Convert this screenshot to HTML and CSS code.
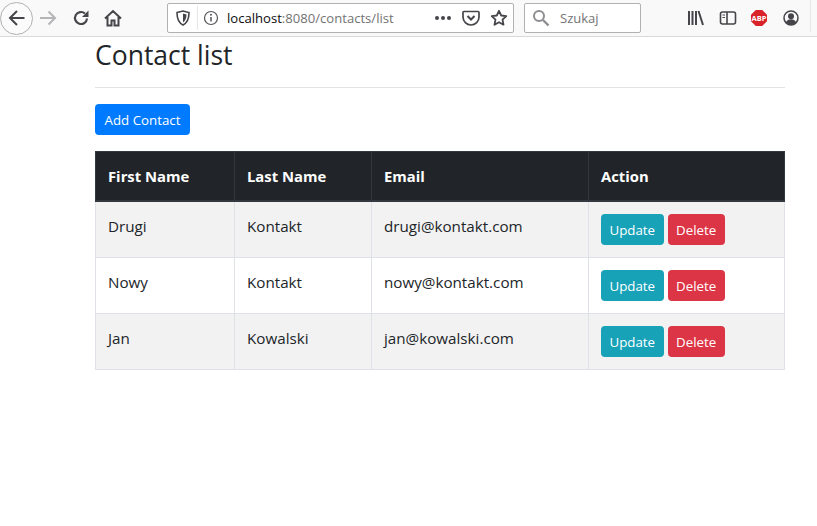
FILE: index.html
```html
<!DOCTYPE html>
<html lang="pl">
<head>
    <meta charset="UTF-8">
    <title>Contact list</title>
    <link rel="stylesheet" href="styles.css">
</head>
<body>
    <!-- Browser toolbar -->
    <div class="toolbar">
        <div class="back-btn">
            <svg width="20" height="20" viewBox="0 0 20 20"><path d="M17.500 10H3.500M10 3L3 10l7 7" fill="none" stroke="#45454a" stroke-width="2"/></svg>
        </div>
        <svg class="forward" width="18" height="18" viewBox="0 0 18 18"><path d="M1 9h15M9.500 2.500L16 9l-6.500 6.500" fill="none" stroke="#b5b5b8" stroke-width="2"/></svg>
        <svg class="reload" width="18" height="18" viewBox="0 0 18 18"><path d="M15 9.500A6 6 0 1 1 13 4.500" fill="none" stroke="#45454a" stroke-width="2.200"/><path d="M16.500 1.500v6.500h-6.500z" fill="#45454a"/></svg>
        <svg class="home" width="18" height="18" viewBox="0 0 18 18"><path d="M1 9.500L9 2l8 7.500M3.500 8v8.500h4v-5h3v5h4V8" fill="none" stroke="#45454a" stroke-width="2"/></svg>

        <div class="urlbar">
            <svg class="shield" width="16" height="16" viewBox="0 0 16 16"><path d="M2 2.500L8 1l6 1.500c0 6-1 10-6 12.500C3 12.500 2 8.500 2 2.500z" fill="none" stroke="#45454a" stroke-width="1.600"/><path d="M8 3.500l3.500 1c0 3.500-1 6-3.500 8z" fill="#45454a"/></svg>
            <span class="url-sep"></span>
            <svg class="info" width="16" height="16" viewBox="0 0 16 16"><circle cx="8" cy="8" r="6.500" fill="none" stroke="#55555a" stroke-width="1.200"/><path d="M8 7v4.500" stroke="#55555a" stroke-width="1.500"/><circle cx="8" cy="4.800" r="1" fill="#55555a"/></svg>
            <span class="url-text">localhost<span class="url-dim">:8080/contacts/list</span></span>
            <span class="dots"><i></i><i></i><i></i></span>
            <svg class="pocket" width="18" height="18" viewBox="0 0 18 18"><path d="M2 2.500h14a1 1 0 0 1 1 1V8a8 8 0 0 1-16 0V3.500a1 1 0 0 1 1-1z" fill="none" stroke="#45454a" stroke-width="1.700"/><path d="M5.500 7L9 10.500 12.500 7" fill="none" stroke="#45454a" stroke-width="2"/></svg>
            <svg class="star" width="18" height="18" viewBox="0 0 18 18"><path d="M9 1.800l2.200 4.700 5.100.6-3.800 3.500 1 5.100L9 13.200l-4.500 2.500 1-5.100L1.700 7.100l5.100-.6z" fill="none" stroke="#45454a" stroke-width="1.800" stroke-linejoin="round"/></svg>
        </div>

        <div class="searchbar">
            <svg width="18" height="18" viewBox="0 0 18 18"><circle cx="7" cy="7" r="5" fill="none" stroke="#8d8d92" stroke-width="2"/><path d="M11 11l5.500 5.500" stroke="#8d8d92" stroke-width="2.400"/></svg>
            <span>Szukaj</span>
        </div>

        <div class="tools">
            <svg width="18" height="18" viewBox="0 0 18 18"><path d="M2 2v14M5.500 2v14M9 2v14M11.500 2l4.500 14" fill="none" stroke="#45454a" stroke-width="2"/></svg>
            <svg width="18" height="18" viewBox="0 0 18 18"><rect x="1.500" y="3" width="15" height="12" rx="2" fill="none" stroke="#45454a" stroke-width="1.600"/><path d="M8 3v12" stroke="#45454a" stroke-width="1.600"/><path d="M3.500 6h2.500M3.500 8.500h2.500" stroke="#45454a" stroke-width="1.200"/></svg>
            <div class="abp">ABP</div>
            <svg class="profile" width="18" height="18" viewBox="0 0 18 18"><circle cx="9" cy="9" r="7" fill="none" stroke="#45454a" stroke-width="1.500"/><circle cx="9" cy="7.300" r="3" fill="#45454a"/><path d="M3.800 13.500c1-2.600 3-3.300 5.200-3.300s4.200.7 5.200 3.300C13 15.300 11 16 9 16s-4-.7-5.200-2.500z" fill="#45454a"/></svg>
        </div>
        <span class="tool-sep"></span>
    </div>

    <!-- Page -->
    <div class="container">
        <h2>Contact list</h2>
        <hr>
        <button class="btn btn-primary btn-add">Add Contact</button>
        <table class="contacts">
            <thead>
                <tr>
                    <th class="col-first">First Name</th>
                    <th class="col-last">Last Name</th>
                    <th class="col-email">Email</th>
                    <th>Action</th>
                </tr>
            </thead>
            <tbody>
                <tr>
                    <td>Drugi</td>
                    <td>Kontakt</td>
                    <td>drugi@kontakt.com</td>
                    <td><div class="actions"><button class="btn btn-info">Update</button><button class="btn btn-danger">Delete</button></div></td>
                </tr>
                <tr>
                    <td>Nowy</td>
                    <td>Kontakt</td>
                    <td>nowy@kontakt.com</td>
                    <td><div class="actions"><button class="btn btn-info">Update</button><button class="btn btn-danger">Delete</button></div></td>
                </tr>
                <tr>
                    <td>Jan</td>
                    <td>Kowalski</td>
                    <td>jan@kowalski.com</td>
                    <td><div class="actions"><button class="btn btn-info">Update</button><button class="btn btn-danger">Delete</button></div></td>
                </tr>
            </tbody>
        </table>
    </div>
</body>
</html>
```

FILE: styles.css
```css
body {
    margin: 0;
    font-family: "Open Sans", "Noto Sans", sans-serif;
    font-size: 16px;
    color: #212529;
    background-color: #fff;
}

/* Browser toolbar */
.toolbar {
    display: flex;
    align-items: center;
    height: 36px;
    background-color: #f9f9fa;
    border-bottom: 1px solid #d9d9da;
}
.back-btn {
    display: flex;
    align-items: center;
    justify-content: center;
    width: 31px;
    height: 31px;
    border: 1px solid #b1b1b3;
    border-radius: 50%;
    background-color: #fbfbfb;
}
.forward {
    margin-left: 6px;
}
.reload {
    margin-left: 15px;
}
.home {
    margin-left: 14px;
}
.urlbar {
    display: flex;
    align-items: center;
    box-sizing: border-box;
    width: 347px;
    height: 30px;
    margin-left: 45px;
    padding-left: 7px;
    background-color: #fff;
    border: 1px solid #b1b1b3;
    border-radius: 2px;
}
.url-sep {
    width: 1px;
    height: 24px;
    margin-left: 6px;
    background-color: #e6e6e7;
}
.info {
    margin-left: 5px;
}
.url-text {
    width: 208px;
    margin-left: 8px;
    font-size: 13.1px;
    color: #0c0c0d;
    white-space: nowrap;
}
.url-dim {
    color: #737373;
}
.dots {
    display: flex;
    gap: 2px;
}
.dots i {
    width: 4px;
    height: 4px;
    border-radius: 50%;
    background-color: #45454a;
}
.pocket {
    margin-left: 11px;
}
.star {
    margin-left: 10px;
}
.searchbar {
    display: flex;
    align-items: center;
    gap: 10px;
    box-sizing: border-box;
    width: 117px;
    height: 30px;
    margin-left: 10px;
    padding-left: 7px;
    background-color: #fff;
    border: 1px solid #b1b1b3;
    border-radius: 2px;
    font-size: 13px;
    color: #737373;
}
.tools {
    display: flex;
    align-items: center;
    gap: 14px;
    margin-left: 46px;
}
.abp {
    width: 16px;
    height: 16px;
    clip-path: polygon(30% 0, 70% 0, 100% 30%, 100% 70%, 70% 100%, 30% 100%, 0 70%, 0 30%);
    background-color: #d8232a;
    color: #fff;
    font-size: 7.500px;
    font-weight: bold;
    line-height: 16px;
    text-align: center;
}
.profile {
    margin-left: 1px;
}
.tool-sep {
    align-self: flex-start;
    width: 1px;
    height: 32px;
    margin-left: 10px;
    background-color: #e6e6e7;
}

/* Page */
.container {
    width: 690px;
    margin-left: 95px;
}
h2 {
    margin: 0;
    font-size: 26.500px;
    font-weight: 400;
    line-height: 37px;
}
hr {
    margin: 13px 0 16px;
    border: 0;
    border-top: 1px solid #e3e3e4;
}
.btn {
    padding: 7px 7.500px 5px;
    border: 1px solid transparent;
    border-radius: 4px;
    font-family: inherit;
    font-size: 13.300px;
    line-height: 17px;
    color: #fff;
    cursor: pointer;
}
.btn-primary {
    background-color: #007bff;
}
.btn-info {
    background-color: #17a2b8;
}
.btn-danger {
    background-color: #dc3545;
}
.btn-add {
    display: block;
    width: 95px;
    height: 31px;
    padding: 1px 0 0;
}

.contacts {
    width: 690px;
    margin-top: 16px;
    border-collapse: collapse;
    table-layout: fixed;
    font-size: 15.200px;
}
.contacts th,
.contacts td {
    box-sizing: border-box;
    padding: 0 12px;
}
.col-first {
    width: 139px;
}
.col-last {
    width: 137px;
}
.col-email {
    width: 217px;
}
.contacts th {
    height: 49px;
    background-color: #212529;
    border: 1px solid #32383e;
    border-bottom-width: 2px;
    color: #fff;
    font-size: 14.800px;
    font-weight: 700;
    text-align: left;
}
.contacts td {
    height: 56px;
    padding-top: 12px;
    border: 1px solid #dee2e6;
    line-height: 24px;
    vertical-align: top;
}
.contacts tbody tr:first-child td {
    height: 57px;
}
.contacts tbody tr:nth-child(odd) {
    background-color: #f2f2f2;
}
.actions {
    display: flex;
    gap: 4px;
}
```
